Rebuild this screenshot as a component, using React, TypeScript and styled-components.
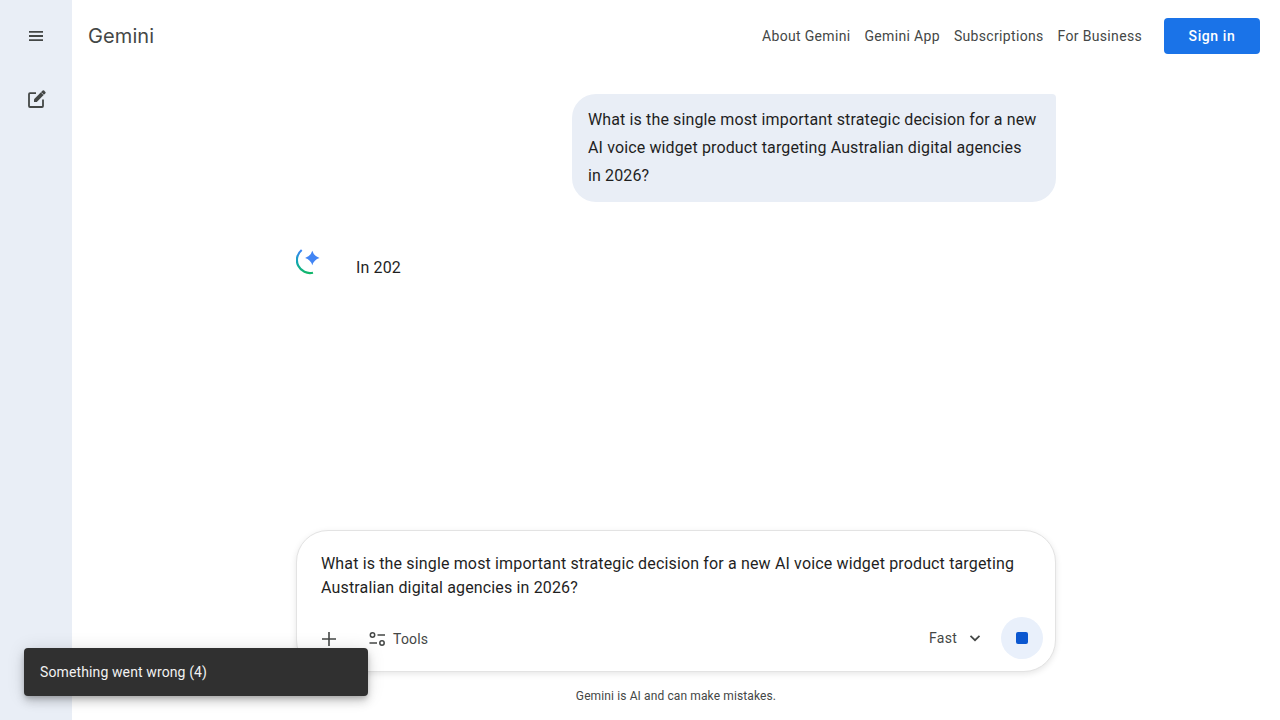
import React from 'react';
import styled, { createGlobalStyle } from 'styled-components';

const Global = createGlobalStyle`
  html, body { margin: 0; padding: 0; height: 100%; background: #fff; }
  body { font-family: Roboto, "Liberation Sans", sans-serif; color: #1f1f1f; overflow: hidden; }
  #root { height: 100%; }
`;

const Page = styled.div`
  display: flex;
  width: 1280px;
  height: 720px;
  position: relative;
  overflow: hidden;
`;

const Rail = styled.aside`
  width: 72px;
  flex: none;
  background: #e9eef6;
  display: flex;
  flex-direction: column;
  align-items: center;
  padding-top: 24px;
  gap: 39px;
  box-sizing: border-box;
  color: #444746;
`;

const RailIcon = styled.span`
  width: 24px;
  height: 24px;
  display: block;
`;

const Main = styled.main`
  flex: 1;
  min-width: 0;
  display: flex;
  flex-direction: column;
`;

const Header = styled.header`
  height: 72px;
  flex: none;
  display: flex;
  align-items: center;
  padding: 0 20px 0 16px;
  box-sizing: border-box;
`;

const Brand = styled.div`
  font-family: Inter, Roboto, sans-serif;
  font-size: 20px;
  letter-spacing: 0.1px;
  color: #444746;
  flex: 1;
`;

const Nav = styled.nav`
  display: flex;
  align-items: center;
  gap: 14px;
  margin-right: 22px;
`;

const NavLink = styled.a`
  font-size: 14px;
  font-weight: 450;
  letter-spacing: 0.33px;
  color: #444746;
  text-decoration: none;
`;

const SignIn = styled.button`
  width: 96px;
  height: 36px;
  border: 0;
  border-radius: 4px;
  background: #1a73e8;
  color: #fff;
  font: 500 14px Roboto, sans-serif;
  letter-spacing: 0.6px;
  padding: 0;
`;

const Chat = styled.div`
  flex: 1;
  min-height: 0;
  width: 760px;
  margin: 0 auto;
  display: flex;
  flex-direction: column;
  padding-top: 22px;
`;

const UserBubble = styled.div`
  align-self: flex-end;
  width: 484px;
  box-sizing: border-box;
  background: #e9eef6;
  border-radius: 24px 4px 24px 24px;
  padding: 12px 18px 12px 16px;
  font-size: 16px;
  letter-spacing: 0.13px;
  line-height: 28px;
  color: #1f1f1f;
`;

const Reply = styled.div`
  display: flex;
  margin-top: 43px;
  gap: 32px;
`;

const Spark = styled.svg`
  width: 28px;
  height: 32px;
  flex: none;
`;

const ReplyText = styled.div`
  font-size: 16px;
  letter-spacing: 0.14px;
  line-height: 28px;
  margin-top: 9px;
`;

const Composer = styled.div`
  width: 760px;
  height: 142px;
  margin: 0 auto;
  box-sizing: border-box;
  border: 1px solid #e3e3e3;
  border-radius: 32px;
  background: #fff;
  box-shadow: 0 2px 6px rgba(0, 0, 0, 0.1);
  padding: 21px 12px 12px 24px;
  display: flex;
  flex-direction: column;
  justify-content: space-between;
  flex: none;
`;

const Prompt = styled.div`
  font-size: 16px;
  letter-spacing: 0.15px;
  line-height: 24px;
  color: #1f1f1f;
`;

const Actions = styled.div`
  display: flex;
  align-items: center;
`;

const Plus = styled.svg`
  width: 18px;
  height: 18px;
  color: #444746;
  margin: 2px 0 0 -1px;
`;

const ToolsBtn = styled.div`
  display: flex;
  align-items: center;
  gap: 7px;
  margin: 2px 0 0 30px;
  font-size: 14px;
  font-weight: 450;
  letter-spacing: 0.2px;
  color: #444746;
  flex: 1;
`;

const ModelPick = styled.div`
  display: flex;
  align-items: center;
  gap: 10px;
  font-size: 14px;
  font-weight: 450;
  letter-spacing: 0.25px;
  color: #444746;
  margin-right: 18px;
`;

const Stop = styled.div`
  width: 42px;
  height: 42px;
  border-radius: 50%;
  background: #e9f0fb;
  display: flex;
  align-items: center;
  justify-content: center;
`;

const StopSquare = styled.div`
  width: 12px;
  height: 12px;
  border-radius: 2px;
  background: #0b57d0;
`;

const Disclaimer = styled.div`
  height: 48px;
  flex: none;
  box-sizing: border-box;
  padding-top: 16px;
  text-align: center;
  font-size: 12px;
  letter-spacing: 0.12px;
  line-height: 16px;
  color: #444746;
`;

const Toast = styled.div`
  position: absolute;
  left: 24px;
  top: 648px;
  width: 344px;
  height: 48px;
  box-sizing: border-box;
  padding: 0 16px;
  display: flex;
  align-items: center;
  background: #303030;
  color: #f2f2f2;
  border-radius: 4px;
  font-size: 14px;
  letter-spacing: 0.12px;
  box-shadow: 0 3px 5px -1px rgba(0,0,0,.2), 0 6px 10px rgba(0,0,0,.14), 0 1px 18px rgba(0,0,0,.12);
`;

const Menu = () => (
  <RailIcon as="svg" viewBox="0 0 24 24" fill="currentColor">
    <path d="M5 7h14v1.8H5zM5 11.1h14v1.8H5zM5 15.2h14V17H5z" />
  </RailIcon>
);

const Edit = () => (
  <RailIcon as="svg" viewBox="0 0 24 24" fill="none">
    <path d="M12 6.200H6a1 1 0 0 0-1 1V19a1 1 0 0 0 1 1h12a1 1 0 0 0 1-1v-6.500" stroke="currentColor" strokeWidth="1.8" />
    <path d="M10 15v-2.800l8.700-8.600a1 1 0 0 1 1.400 0l1.300 1.300a1 1 0 0 1 0 1.400L12.800 15z" fill="currentColor" />
    <path d="M17.300 5.500l2.400 2.400" stroke="#e9eef6" strokeWidth="0.7" />
  </RailIcon>
);

export default function App() {
  return (
    <>
      <Global />
      <Page>
        <Rail>
          <Menu />
          <Edit />
        </Rail>
        <Main>
          <Header>
            <Brand>Gemini</Brand>
            <Nav>
              <NavLink>About Gemini</NavLink>
              <NavLink>Gemini App</NavLink>
              <NavLink>Subscriptions</NavLink>
              <NavLink>For Business</NavLink>
            </Nav>
            <SignIn>Sign in</SignIn>
          </Header>
          <Chat>
            <UserBubble>
              What is the single most important strategic decision for a new AI voice widget product targeting Australian digital agencies in 2026?
            </UserBubble>
            <Reply>
              <Spark viewBox="0 0 28 32">
                <defs>
                  <linearGradient id="arc" gradientUnits="userSpaceOnUse" x1="0" y1="5" x2="0" y2="28">
                    <stop offset="0" stopColor="#3b82f6" />
                    <stop offset="0.5" stopColor="#12a5b5" />
                    <stop offset="1" stopColor="#12b76a" />
                  </linearGradient>
                </defs>
                <path d="M5.700 5A13 13 0 0 0 17 27.700" fill="none" stroke="url(#arc)" strokeWidth="2.200" />
                <path d="M16.300 5.800Q18 11.300 23.500 13 18 14.700 16.300 20.200 14.600 14.700 9.100 13 14.600 11.300 16.300 5.800z" fill="#4285f4" />
              </Spark>
              <ReplyText>In 202</ReplyText>
            </Reply>
          </Chat>
          <Composer>
            <Prompt>
              What is the single most important strategic decision for a new AI voice widget product targeting Australian digital agencies in 2026?
            </Prompt>
            <Actions>
              <Plus viewBox="0 0 18 18" fill="none" stroke="currentColor" strokeWidth="1.6">
                <path d="M9 2v14M2 9h14" />
              </Plus>
              <ToolsBtn>
                <svg width="18" height="18" viewBox="0 0 18 18" fill="none" stroke="currentColor" strokeWidth="1.5">
                  <circle cx="4.500" cy="5" r="2.200" />
                  <path d="M9.500 5H17M1.500 13H9" />
                  <circle cx="14" cy="13" r="2.200" />
                </svg>
                Tools
              </ToolsBtn>
              <ModelPick>
                Fast
                <svg width="16" height="16" viewBox="0 0 16 16" fill="none" stroke="currentColor" strokeWidth="1.7">
                  <path d="M3.500 5.800 8 10.200l4.500-4.400" />
                </svg>
              </ModelPick>
              <Stop><StopSquare /></Stop>
            </Actions>
          </Composer>
          <Disclaimer>Gemini is AI and can make mistakes.</Disclaimer>
        </Main>
        <Toast>Something went wrong (4)</Toast>
      </Page>
    </>
  );
}
